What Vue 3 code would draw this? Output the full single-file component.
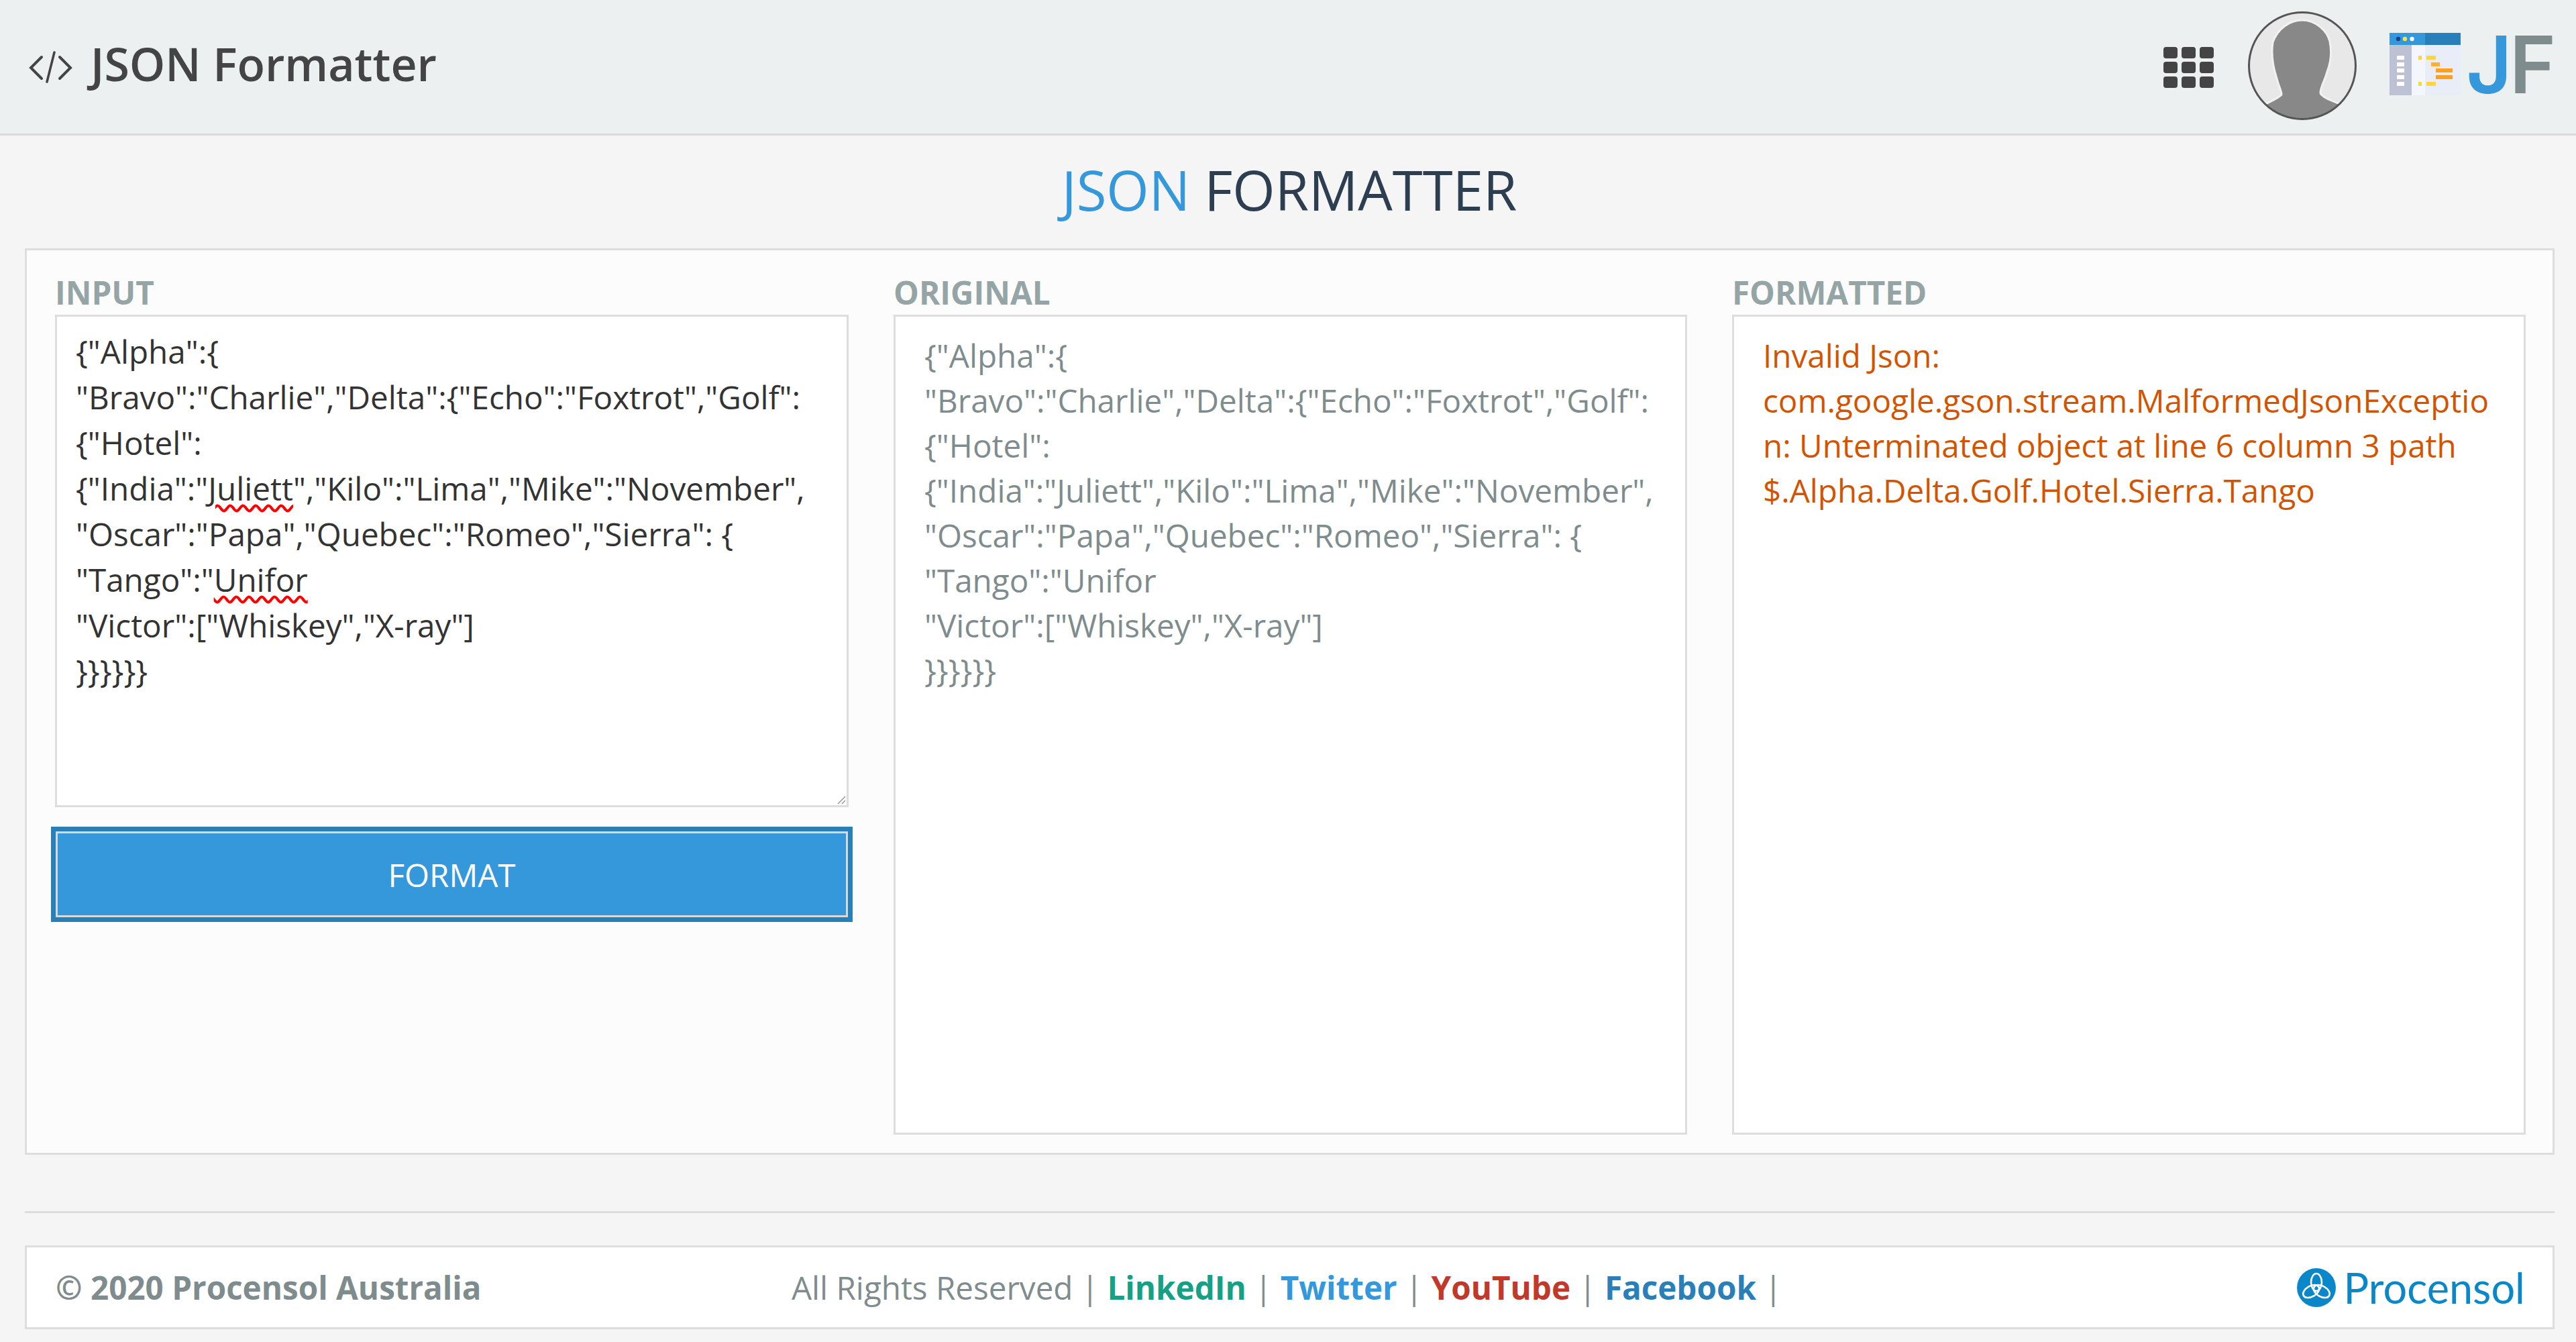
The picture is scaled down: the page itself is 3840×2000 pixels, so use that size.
<script setup>
const inputLines = [
  [{ t: '{"Alpha":{' }],
  [{ t: '"Bravo":"Charlie","Delta":{"Echo":"Foxtrot","Golf":' }],
  [{ t: '{"Hotel":' }],
  [{ t: '{"India":"' }, { t: 'Juliett', bad: true }, { t: '","Kilo":"Lima","Mike":"November",' }],
  [{ t: '"Oscar":"Papa","Quebec":"Romeo","Sierra": {' }],
  [{ t: '"Tango":"' }, { t: 'Unifor', bad: true }],
  [{ t: '"Victor":["Whiskey","X-ray"]' }],
  [{ t: '}}}}}}' }]
]
const originalLines = inputLines.map(l => l.map(p => p.t).join(''))
const errorLines = [
  'Invalid Json:',
  'com.google.gson.stream.MalformedJsonExceptio',
  'n: Unterminated object at line 6 column 3 path',
  '$.Alpha.Delta.Golf.Hotel.Sierra.Tango'
]
const gridCells = Array.from({ length: 9 })
const links = [
  { label: 'LinkedIn', cls: 'linkedin' },
  { label: 'Twitter', cls: 'twitter' },
  { label: 'YouTube', cls: 'youtube' },
  { label: 'Facebook', cls: 'facebook' }
]
</script>

<template>
  <div class="page">
    <header class="topbar">
      <div class="brand">
        <svg class="code-icon" viewBox="0 0 65 48" fill="none" stroke="#444" stroke-width="4" stroke-linecap="round" stroke-linejoin="miter">
          <path d="M19 9 L3 25 L19 41" />
          <path d="M46 9 L62 25 L46 41" />
          <path d="M38 2 L27 46" stroke-width="3.5" />
        </svg>
        <span class="brand-name">JSON Formatter</span>
      </div>
      <div class="top-actions">
        <div class="apps">
          <span v-for="(c, i) in gridCells" :key="i" class="app-cell"></span>
        </div>
        <svg class="avatar" viewBox="0 0 162 162">
          <defs>
            <clipPath id="avatar-clip"><circle cx="81" cy="81" r="79" /></clipPath>
          </defs>
          <circle cx="81" cy="81" r="79" fill="#e8e8e8" />
          <path clip-path="url(#avatar-clip)" fill="#888" stroke="#f1f1f1" stroke-width="3"
            d="M81 13 C62 13 44 26 37 46 C34 66 38 85 43 100 C46 112 50 118 50 124 C46 129 36 133 26 138 C36 160 60 170 81 170 C102 170 126 160 137 138 C126 133 112 129 108 122 C108 112 114 105 118 90 C124 75 125 60 122 45 C118 28 100 13 81 13 Z" />
          <circle cx="81" cy="81" r="79.5" fill="none" stroke="#555" stroke-width="3" />
        </svg>
        <div class="jf-logo">
          <svg class="jf-window" viewBox="0 0 106 93">
            <rect x="33" y="18" width="73" height="75" fill="#e9edf7" />
            <rect x="33" y="18" width="20" height="75" fill="#f3f6fd" />
            <rect x="0" y="18" width="33" height="75" fill="#bcc2d4" />
            <rect x="0" y="0" width="53" height="18" fill="#3498db" />
            <rect x="53" y="0" width="53" height="18" fill="#2980b9" />
            <circle cx="13" cy="9" r="3.2" fill="#1d3f8f" />
            <circle cx="23" cy="9" r="3.2" fill="#ffe14d" />
            <circle cx="33.500" cy="9" r="3.2" fill="#fff" />
            <g fill="#fff">
              <rect x="11" y="34" width="11" height="6" />
              <rect x="11" y="44" width="11" height="6" />
              <rect x="11" y="53" width="11" height="6" />
              <rect x="11" y="63" width="11" height="6" />
              <rect x="11" y="73" width="11" height="6" />
            </g>
            <g fill="#ffd63e">
              <rect x="43" y="34" width="5" height="6" />
              <rect x="55" y="34" width="14" height="6" />
              <rect x="43" y="73" width="5" height="6" />
              <rect x="55" y="73" width="14" height="6" />
            </g>
            <rect x="62" y="44" width="13" height="6" fill="#ffb02e" />
            <rect x="69" y="53" width="25" height="6" fill="#ff9f1a" />
            <rect x="69" y="63" width="25" height="6" fill="#ff9f1a" />
          </svg>
          <span class="jf-text"><span class="jf-j">J</span><span class="jf-f">F</span></span>
        </div>
      </div>
    </header>

    <h1 class="page-title"><span class="title-accent">JSON</span> FORMATTER</h1>

    <main class="panel">
      <section class="column">
        <div class="col-label">INPUT</div>
        <div class="input-box">
          <div v-for="(line, i) in inputLines" :key="i" class="code-line">
            <span v-for="(part, j) in line" :key="j" :class="{ misspelled: part.bad }">{{ part.t }}</span>
          </div>
          <svg class="resize-grip" viewBox="0 0 14 14" stroke="#999" stroke-width="1.500" fill="none">
            <path d="M2 13 L13 2 M8 13 L13 8" />
          </svg>
        </div>
        <button class="format-btn" type="button">FORMAT</button>
      </section>

      <section class="column">
        <div class="col-label">ORIGINAL</div>
        <div class="output-box original">
          <div v-for="(line, i) in originalLines" :key="i" class="code-line">{{ line }}</div>
        </div>
      </section>

      <section class="column">
        <div class="col-label">FORMATTED</div>
        <div class="output-box error">
          <div v-for="(line, i) in errorLines" :key="i" class="code-line">{{ line }}</div>
        </div>
      </section>
    </main>

    <hr class="divider" />

    <footer class="footer">
      <div class="copyright">© 2020 Procensol Australia</div>
      <div class="foot-links">
        All Rights Reserved |
        <template v-for="l in links" :key="l.label">
          <a class="foot-link" :class="l.cls">{{ l.label }}</a> |
        </template>
      </div>
      <div class="procensol">
        <svg class="knot" viewBox="0 0 58 58">
          <circle cx="29" cy="29" r="29" fill="#0a87c9" />
          <g fill="none" stroke="#fff" stroke-width="2.600">
            <ellipse cx="29" cy="21" rx="8" ry="13" />
            <ellipse cx="29" cy="21" rx="8" ry="13" transform="rotate(120 29 30)" />
            <ellipse cx="29" cy="21" rx="8" ry="13" transform="rotate(240 29 30)" />
          </g>
        </svg>
        <span class="procensol-name">Procensol</span>
      </div>
    </footer>
  </div>
</template>

<style scoped>
.page {
  width: 3840px;
  height: 2000px;
  overflow: hidden;
  background: #f5f5f5;
  font-family: "Open Sans", "Liberation Sans", sans-serif;
  color: #333;
}
.topbar {
  box-sizing: border-box;
  height: 202px;
  background: #ecf0f1;
  border-bottom: 3px solid #d8dbdc;
  display: flex;
  align-items: center;
  justify-content: space-between;
  padding: 0 30px 0 43px;
}
.brand {
  display: flex;
  align-items: center;
  gap: 27px;
}
.code-icon {
  width: 65px;
  height: 48px;
}
.brand-name {
  font-size: 68px;
  font-weight: 600;
  color: #444;
  line-height: 1;
  padding-bottom: 10px;
}
.top-actions {
  display: flex;
  align-items: center;
}
.apps {
  display: grid;
  grid-template-columns: repeat(3, 21px);
  grid-auto-rows: 17px;
  gap: 5px 6px;
  margin-right: 51px;
  margin-top: 2px;
}
.app-cell {
  background: #444;
  border-radius: 4px;
}
.avatar {
  width: 162px;
  height: 162px;
  margin-right: 49px;
  margin-top: -4px;
}
.jf-logo {
  display: flex;
  align-items: center;
}
.jf-window {
  width: 106px;
  height: 93px;
  margin-top: -8px;
}
.jf-text {
  font-family: "Inter", "Liberation Sans", sans-serif;
  font-size: 118px;
  font-weight: 600;
  line-height: 1;
  margin-left: 8px;
  margin-top: -8px;
}
.jf-j {
  color: #3498db;
  letter-spacing: -4px;
}
.jf-f {
  color: #7f8c8d;
}
.page-title {
  margin: 0;
  height: 168px;
  padding-left: 4px;
  line-height: 162px;
  text-align: center;
  font-size: 81.5px;
  font-weight: 400;
  color: #2c3e50;
}
.title-accent {
  color: #3498db;
}
.panel {
  box-sizing: border-box;
  height: 1351px;
  margin: 0 32px 0 37px;
  padding: 30px 0 0 42px;
  background: #fcfcfc;
  border: 3px solid #ddd;
  display: grid;
  grid-template-columns: repeat(3, 1183px);
  column-gap: 67px;
}
.col-label {
  font-size: 47.6px;
  font-weight: 700;
  line-height: 66px;
  color: #95a5a6;
}
.input-box,
.output-box {
  box-sizing: border-box;
  border: 3px solid #ddd;
  background: #fff;
  font-size: 47.6px;
}
.input-box {
  position: relative;
  height: 734px;
  padding: 18px 0 0 28px;
  line-height: 68px;
  color: #333;
}
.output-box {
  height: 1222px;
  padding: 24px 0 0 43px;
  line-height: 67px;
}
.output-box.original {
  color: #7f8c8d;
}
.output-box.error {
  color: #d35400;
}
.code-line {
  white-space: pre;
}
.misspelled {
  text-decoration: underline wavy #f00 4px;
  text-underline-offset: 6px;
}
.resize-grip {
  position: absolute;
  right: 1px;
  bottom: 1px;
  width: 14px;
  height: 14px;
}
.format-btn {
  display: block;
  box-sizing: border-box;
  width: 1181px;
  height: 128px;
  margin: 36px 0 0 1px;
  background: #3498db;
  border: 3px solid #d6dadc;
  outline: 7px solid #2980b9;
  font-family: inherit;
  font-size: 47.6px;
  color: #fff;
  padding: 0;
}
.divider {
  height: 3px;
  margin: 84px 32px 48px 37px;
  border: 0;
  background: #ddd;
}
.footer {
  box-sizing: border-box;
  height: 125px;
  margin: 0 32px 0 37px;
  padding: 0 41px 0 43px;
  background: #fff;
  border: 3px solid #ddd;
  display: grid;
  grid-template-columns: 1097px auto 1fr;
  align-items: center;
  font-size: 47.6px;
  color: #7f8c8d;
}
.copyright {
  font-weight: 700;
}
.foot-link {
  font-weight: 700;
}
.linkedin { color: #16a085; }
.twitter { color: #3498db; }
.youtube { color: #c0392b; }
.facebook { color: #2980b9; }
.procensol {
  justify-self: end;
  display: flex;
  align-items: center;
  gap: 12px;
}
.knot {
  width: 58px;
  height: 58px;
}
.procensol-name {
  font-family: "Lato", "Liberation Sans", sans-serif;
  font-size: 63px;
  font-weight: 400;
  color: #0a87c9;
  line-height: 1;
}
</style>

<style>
html, body {
  margin: 0;
  background: #f5f5f5;
}
</style>
